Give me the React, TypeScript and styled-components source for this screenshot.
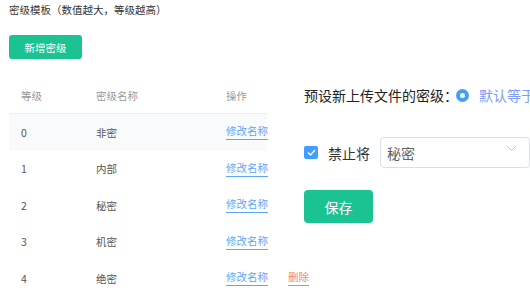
import React from 'react';
import styled, { createGlobalStyle } from 'styled-components';

const GlobalStyle = createGlobalStyle`
  html, body {
    margin: 0;
    padding: 0;
    background: #fff;
    overflow: hidden;
  }
  body {
    font-family: "Noto Sans CJK SC", "Noto Sans", sans-serif;
    color: #333;
  }
`;

interface LevelRow {
  level: number;
  name: string;
  deletable?: boolean;
}

const rows: LevelRow[] = [
  { level: 0, name: '非密' },
  { level: 1, name: '内部' },
  { level: 2, name: '秘密' },
  { level: 3, name: '机密' },
  { level: 4, name: '绝密', deletable: true },
];

function App() {
  return (
    <>
      <GlobalStyle />
      <Page>
        <LeftPane>
          <Title>密级模板（数值越大，等级越高）</Title>
          <AddButton>新增密级</AddButton>
          <Table>
            <HeaderRow>
              <Cell>等级</Cell>
              <Cell>密级名称</Cell>
              <Cell>操作</Cell>
            </HeaderRow>
            {rows.map((row, i) => (
              <BodyRow key={row.level} $highlight={i === 0}>
                <Cell>{row.level}</Cell>
                <Cell>{row.name}</Cell>
                <OpsCell>
                  <LinkText>修改名称</LinkText>
                  {row.deletable && <LinkText $danger>删除</LinkText>}
                </OpsCell>
              </BodyRow>
            ))}
          </Table>
        </LeftPane>

        <RightPane>
          <PresetRow>
            <span>预设新上传文件的密级：</span>
            <Radio />
            <RadioLabel>默认等于上一级目录的密级</RadioLabel>
          </PresetRow>
          <ForbidRow>
            <Checkbox>
              <svg width="9" height="7" viewBox="0 0 9 7">
                <path d="M1 3.5 L3.5 6 L8 1" fill="none" stroke="#fff" strokeWidth="1.3" />
              </svg>
            </Checkbox>
            <ForbidLabel>禁止将</ForbidLabel>
            <Select>
              <span>秘密</span>
              <svg width="11" height="7" viewBox="0 0 11 7">
                <path d="M1 1 L5.5 5.5 L10 1" fill="none" stroke="#c0c4cc" strokeWidth="1" />
              </svg>
            </Select>
          </ForbidRow>
          <SaveButton>保存</SaveButton>
        </RightPane>
      </Page>
    </>
  );
}

const Page = styled.div`
  display: flex;
  align-items: flex-start;
  padding: 2px 0 0 9px;
  width: 530px;
  height: 300px;
  box-sizing: border-box;
`;

const LeftPane = styled.div`
  display: flex;
  flex-direction: column;
  align-items: flex-start;
  width: 258px;
  flex-shrink: 0;
`;

const Title = styled.div`
  font-size: 10.5px;
  line-height: 16px;
  color: #333;
`;

const AddButton = styled.button`
  margin-top: 17px;
  width: 73px;
  height: 24px;
  border: none;
  border-radius: 3px;
  background: #1bc393;
  color: #fff;
  font-family: inherit;
  font-size: 10.5px;
  padding: 0;
`;

const Table = styled.div`
  margin-top: 19px;
  width: 258px;
`;

const HeaderRow = styled.div`
  display: grid;
  grid-template-columns: 75px 130px 1fr;
  height: 35px;
  align-items: center;
  border-bottom: 1px solid #ebeef5;
  color: #999;
  font-size: 10.5px;
`;

const BodyRow = styled.div<{ $highlight?: boolean }>`
  display: grid;
  grid-template-columns: 75px 130px 1fr;
  height: 36.5px;
  align-items: center;
  background: ${(p) => (p.$highlight ? '#f9fafc' : 'transparent')};
  color: #555;
  font-size: 10.5px;
`;

const Cell = styled.div`
  padding-left: 12px;
  white-space: nowrap;
`;

const OpsCell = styled(Cell)`
  display: flex;
  gap: 20px;
`;

const LinkText = styled.span<{ $danger?: boolean }>`
  color: ${(p) => (p.$danger ? '#f2886a' : '#5ea5f8')};
  border-bottom: 1px solid ${(p) => (p.$danger ? '#f2886a' : '#5ea5f8')};
  padding-bottom: 1px;
  line-height: 14px;
`;

const RightPane = styled.div`
  display: flex;
  flex-direction: column;
  align-items: flex-start;
  margin-left: 37px;
  padding-top: 83px;
  white-space: nowrap;
`;

const PresetRow = styled.div`
  display: flex;
  align-items: center;
  font-size: 14px;
  line-height: 20px;
  color: #222;
`;

const Radio = styled.span`
  width: 13px;
  height: 13px;
  border-radius: 50%;
  background: #409eff;
  box-sizing: border-box;
  display: inline-flex;
  align-items: center;
  justify-content: center;
  margin-left: -2px;

  &::after {
    content: '';
    width: 5px;
    height: 5px;
    border-radius: 50%;
    background: #fff;
  }
`;

const RadioLabel = styled.span`
  margin-left: 10px;
  color: #7d9cfb;
`;

const ForbidRow = styled.div`
  display: flex;
  align-items: center;
  margin-top: 32px;
`;

const Checkbox = styled.span`
  width: 14px;
  height: 13px;
  border-radius: 2px;
  background: #409eff;
  display: inline-flex;
  align-items: center;
  justify-content: center;
`;

const ForbidLabel = styled.span`
  margin-left: 10px;
  font-size: 14px;
  color: #333;
`;

const Select = styled.div`
  margin-left: 10px;
  width: 150px;
  height: 31px;
  box-sizing: border-box;
  border: 1px solid #dcdfe6;
  border-radius: 4px;
  display: flex;
  align-items: center;
  justify-content: space-between;
  padding: 0 12px 0 6px;
  font-size: 14px;
  color: #606266;

  svg {
    margin-bottom: 8px;
  }
`;

const SaveButton = styled.button`
  margin-top: 22px;
  width: 69px;
  height: 33px;
  border: none;
  border-radius: 4px;
  background: #1bc393;
  color: #fff;
  font-family: inherit;
  font-size: 14px;
  padding: 0;
`;

export default App;
